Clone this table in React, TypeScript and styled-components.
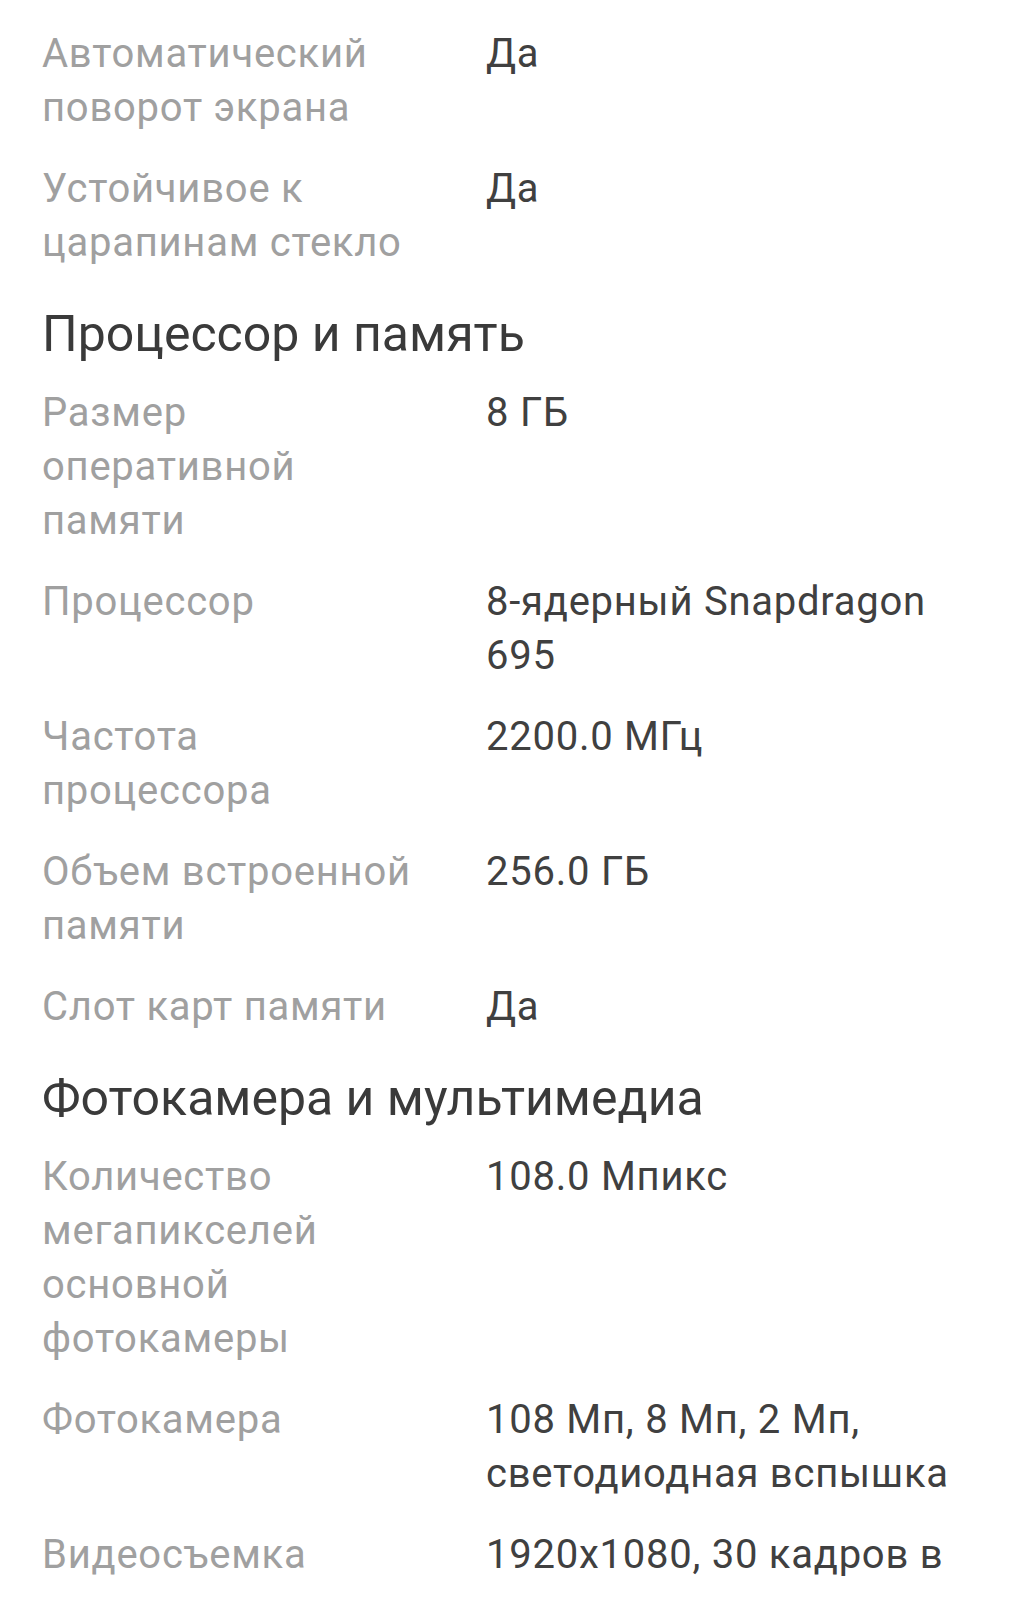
import { FunctionComponent } from "react"
import styled, { createGlobalStyle } from "styled-components"

const GlobalStyle = createGlobalStyle`
    html, body{
        margin: 0;
        padding: 0;
        background: #ffffff;
    }
    body{
        font-family: Roboto, "Noto Sans", "Liberation Sans", sans-serif;
    }
`

const Page = styled.div`
    display: flex;
    flex-direction: column;
    padding: 27px 42px 0 42px;
    width: 1014px;
    box-sizing: border-box;
`

const SectionTitle = styled.h2`
    margin: 10px 0 25px 0;
    font-size: 50px;
    line-height: 54px;
    font-weight: 400;
    color: #3a3a3a;
`

const Row = styled.div`
    display: grid;
    grid-template-columns: 444px 1fr;
    margin-bottom: 27px;
    font-size: 40px;
    line-height: 54px;
    letter-spacing: 0.75px;
`

const Label = styled.div`
    max-width: 382px;
    color: #a0a0a0;
`

const Value = styled.div`
    color: #404040;
`

type Spec = { label: string; value: string }

const display: Spec[] = [
    { label: "Автоматический поворот экрана", value: "Да" },
    { label: "Устойчивое к царапинам стекло", value: "Да" },
]

const cpu: Spec[] = [
    { label: "Размер оперативной памяти", value: "8 ГБ" },
    { label: "Процессор", value: "8-ядерный Snapdragon 695" },
    { label: "Частота процессора", value: "2200.0 МГц" },
    { label: "Объем встроенной памяти", value: "256.0 ГБ" },
    { label: "Слот карт памяти", value: "Да" },
]

const camera: Spec[] = [
    { label: "Количество мегапикселей основной фотокамеры", value: "108.0 Мпикс" },
    { label: "Фотокамера", value: "108 Мп, 8 Мп, 2 Мп, светодиодная вспышка" },
    { label: "Видеосъемка", value: "1920x1080, 30 кадров в секунду" },
]

const Rows: FunctionComponent<{ items: Spec[] }> = ({ items }) => (
    <>
        {items.map((s) => (
            <Row key={s.label}>
                <Label>{s.label}</Label>
                <Value>{s.value}</Value>
            </Row>
        ))}
    </>
)

const App: FunctionComponent = () => {
    return (
        <Page>
            <GlobalStyle />
            <Rows items={display} />
            <SectionTitle>Процессор и память</SectionTitle>
            <Rows items={cpu} />
            <SectionTitle>Фотокамера и мультимедиа</SectionTitle>
            <Rows items={camera} />
        </Page>
    )
}

export default App
